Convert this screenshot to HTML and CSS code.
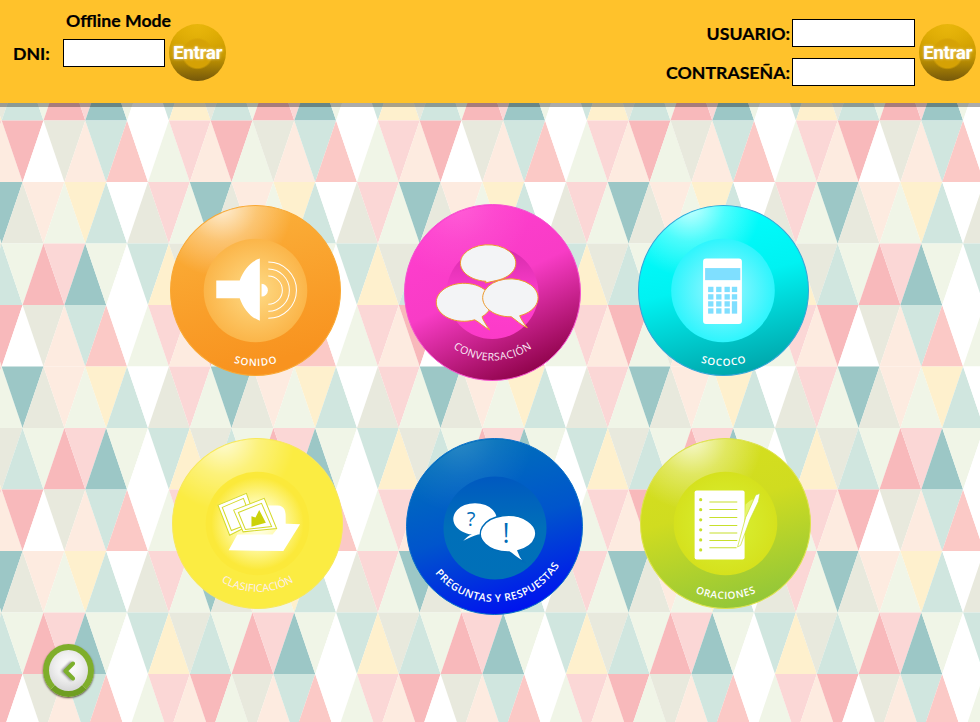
FILE: index.html
```html
<!DOCTYPE html>
<html>
<head>
	<meta charset="utf-8">
	<title>Menu</title>
	<link rel="stylesheet" href="styles.css">
</head>
<body>
<div class="pattern"></div>

<svg class="defs" width="0" height="0">
	<defs>
		<radialGradient id="gloss" cx=".3" cy="0" r=".42">
			<stop offset="0" stop-color="#fff" stop-opacity=".8"/>
			<stop offset=".5" stop-color="#fff" stop-opacity=".3"/>
			<stop offset="1" stop-color="#fff" stop-opacity="0"/>
		</radialGradient>
		<linearGradient id="orange" x1="0" y1="0" x2=".25" y2="1">
			<stop offset="0" stop-color="#fbb33d"/><stop offset="1" stop-color="#f8931f"/>
		</linearGradient>
		<radialGradient id="orange-in">
			<stop offset="0" stop-color="#fedb86"/><stop offset="1" stop-color="#fbb549"/>
		</radialGradient>
		<linearGradient id="pink" x1=".25" y1=".05" x2=".7" y2="1">
			<stop offset="0" stop-color="#ff3ecf"/><stop offset=".45" stop-color="#f83cc6"/><stop offset="1" stop-color="#8a0044"/>
		</linearGradient>
		<linearGradient id="pink-in" x1="0" y1="0" x2="0" y2="1">
			<stop offset="0" stop-color="#d52bab"/><stop offset=".55" stop-color="#ff3ecd"/><stop offset="1" stop-color="#fb3ac8"/>
		</linearGradient>
		<linearGradient id="cyan" x1=".35" y1="0" x2=".6" y2="1">
			<stop offset="0" stop-color="#00ffff"/><stop offset=".45" stop-color="#00f2f2"/><stop offset="1" stop-color="#00a5aa"/>
		</linearGradient>
		<radialGradient id="cyan-in">
			<stop offset="0" stop-color="#a0f6ff"/><stop offset="1" stop-color="#2ef5fd"/>
		</radialGradient>
		<radialGradient id="yellow-in">
			<stop offset="0" stop-color="#fff"/><stop offset=".45" stop-color="#fffbb0"/><stop offset="1" stop-color="#fbe93a"/>
		</radialGradient>
		<linearGradient id="blue" x1=".35" y1="0" x2=".65" y2="1">
			<stop offset="0" stop-color="#0072b8"/><stop offset=".5" stop-color="#0055cc"/><stop offset="1" stop-color="#0010f0"/>
		</linearGradient>
		<linearGradient id="blue-in" x1="0" y1="0" x2="0" y2="1">
			<stop offset="0" stop-color="#0059c0"/><stop offset=".5" stop-color="#006fb9"/><stop offset="1" stop-color="#0070b8"/>
		</linearGradient>
		<linearGradient id="lime" x1=".35" y1="0" x2=".65" y2="1">
			<stop offset="0" stop-color="#d6df1e"/><stop offset=".4" stop-color="#d0dc20"/><stop offset="1" stop-color="#90c63a"/>
		</linearGradient>
		<radialGradient id="lime-in">
			<stop offset="0" stop-color="#d9f236"/><stop offset="1" stop-color="#d5e11d"/>
		</radialGradient>
		<path id="arc170-75" d="M10 85A75 75 0 0 0 160 85"/>
		<path id="arc170-68" d="M17 85A68 68 0 0 0 153 85"/>
		<path id="arc177-68" d="M20.5 88.5A68 68 0 0 0 156.5 88.5"/>
		<path id="arc177-75" d="M13 88.5A75.5 75.5 0 0 0 164 88.5"/>
	</defs>
</svg>

<header class="top">
	<form class="login-offline" action="#">
		<span class="offline-title">Offline Mode</span>
		<label class="dni-label">DNI:</label>
		<input class="field" type="text">
		<button class="entrar" type="button">Entrar</button>
	</form>
	<form class="login-user" action="#">
		<label>USUARIO:</label>
		<input class="field" type="text">
		<button class="entrar" type="button">Entrar</button>
		<label>CONTRASEÑA:</label>
		<input class="field" type="password">
	</form>
</header>

<main class="content">
	<div class="menu">
		<!-- sonido -->
		<svg class="ball" width="171" height="171" viewBox="0 0 170 170">
			<circle cx="85" cy="85" r="84.5" fill="url(#orange)" stroke="#f9a834"/>
			<circle cx="85" cy="85" r="84" fill="url(#gloss)"/>
			<circle cx="85" cy="85" r="51.5" fill="url(#orange-in)"/>
			<path fill="#fff" d="M46 75H69.3C73 65 80 56 89.3 53.3V115C80 112 73 103 69.3 92.7H46Z"/>
			<path fill="#fff" d="M91 78.4A6.3 6.3 0 0 1 91 91Z"/>
			<path fill="none" stroke="#fff" d="M97.700 70.700A14 14 0 0 1 97.700 98.700M97.700 63.700A21 21 0 0 1 97.700 105.700M97.700 56.700A28 28 0 0 1 97.700 112.700"/>
			<text class="ball-label"><textPath href="#arc170-75" startOffset="50%" text-anchor="middle" textLength="44">SONIDO</textPath></text>
		</svg>

		<!-- conversacion -->
		<svg class="ball ball-up" width="177" height="177" viewBox="0 0 177 177">
			<circle cx="88.5" cy="88.5" r="88" fill="url(#pink)" stroke="#f552d0"/>
			<circle cx="88.5" cy="88.5" r="87" fill="url(#gloss)" opacity=".2"/>
			<circle cx="88.5" cy="89" r="46" fill="url(#pink-in)"/>
			<g fill="#f3f4f6" stroke="#ee9a2c">
				<path d="M82 77.3A27.7 18.3 0 1 1 92 76.6L81 79Z"/>
				<path d="M78 112.7A27.7 19 0 1 0 70.7 115.8C75 118 80 123 85.7 126C82 121 79 116 78 112.7Z"/>
				<path d="M115.7 111.7A27.7 19 0 1 0 107.3 112.8C112 116 117 121 123.3 123.7C120 120 117 115 115.7 111.7Z"/>
			</g>
			<text class="ball-label ball-label-thin"><textPath href="#arc177-68" startOffset="50%" text-anchor="middle" textLength="84">CONVERSACIÓN</textPath></text>
		</svg>

		<!-- sococo -->
		<svg class="ball" width="171" height="171" viewBox="0 0 170 170">
			<circle cx="85" cy="85" r="84.5" fill="url(#cyan)" stroke="#35a6d8"/>
			<circle cx="85" cy="85" r="84" fill="url(#gloss)"/>
			<circle cx="84.5" cy="85" r="51.5" fill="url(#cyan-in)"/>
			<rect x="64.7" y="53.3" width="38.6" height="65" rx="3" fill="#fff"/>
			<g fill="#7fdfff">
				<rect x="66.7" y="62.7" width="35" height="12"/>
				<rect x="69.7" y="81.3" width="5.3" height="5.3"/><rect x="77.7" y="81.3" width="5.3" height="5.3"/><rect x="86" y="81.3" width="5.3" height="5.3"/><rect x="93.3" y="81.3" width="5.3" height="5.3"/>
				<rect x="69.7" y="88.7" width="5.3" height="5.3"/><rect x="77.7" y="88.7" width="5.3" height="5.3"/><rect x="86" y="88.7" width="5.3" height="5.3"/><rect x="93.3" y="88.7" width="5.3" height="5.3"/>
				<rect x="69.7" y="95.7" width="5.3" height="5.3"/><rect x="77.7" y="95.7" width="5.3" height="5.3"/><rect x="86" y="95.7" width="5.3" height="5.3"/><rect x="93.3" y="95.7" width="5.3" height="12.3"/>
				<rect x="69.7" y="102.7" width="5.3" height="5.3"/><rect x="77.7" y="102.7" width="5.3" height="5.3"/><rect x="86" y="102.7" width="5.3" height="5.3"/>
			</g>
			<text class="ball-label"><textPath href="#arc170-75" startOffset="50%" text-anchor="middle" textLength="46">SOCOCO</textPath></text>
		</svg>

		<!-- clasificacion -->
		<svg class="ball" width="171" height="171" viewBox="0 0 170 170">
			<circle cx="85" cy="85" r="84.5" fill="#fbec42" stroke="#f8e85a"/>
			<circle cx="85" cy="85" r="84" fill="url(#gloss)"/>
			<circle cx="85" cy="85" r="51.5" fill="#fbe93a"/>
			<circle cx="85" cy="85" r="46" fill="url(#yellow-in)"/>
			<path fill="#fff" d="M90 67H105Q113 67 113 78V90H90Z"/>
			<g fill="#fff" stroke="#d4d92a">
				<path d="M45.7 66.7L74 55L84 83.3L57.3 96.7Z"/>
				<path d="M50 69L71 60L80 84L59 92Z"/>
				<path d="M61.3 71.7L91.7 60L104 90L70.7 93.3Z"/>
				<path d="M66 74L89 65L99 88L73 91Z"/>
			</g>
			<path fill="#ccd20a" d="M79 88.3V77.7L83 79L86.7 71.7L93.3 84.3Z"/>
			<path fill="#fff" d="M56.3 111.7L65 96H100L109 85L127.3 85.7L110.7 112.3Z"/>
			<text class="ball-label ball-label-thin"><textPath href="#arc170-68" startOffset="50%" text-anchor="middle" textLength="76">CLASIFICACIÓN</textPath></text>
		</svg>

		<!-- preguntas -->
		<svg class="ball" width="177" height="177" viewBox="0 0 177 177">
			<circle cx="88.5" cy="88.5" r="88" fill="url(#blue)" stroke="#0a6fc8"/>
			<circle cx="88.5" cy="88.5" r="87" fill="url(#gloss)" opacity=".2"/>
			<circle cx="89" cy="90" r="51.5" fill="url(#blue-in)"/>
			<path fill="#fff" d="M66 96.4A21.7 15.7 0 1 1 72 96.4C67 98 62 100 57.3 102.7C60 100 63 97 66 96.4Z"/>
			<path fill="#fff" stroke="#006cb8" stroke-width="1.5" d="M112 112.8A27.7 18.3 0 1 0 103 114C108 117 113 122 118.3 124C115 120 113 116 112 112.8Z"/>
			<text class="mark" x="65" y="88" font-size="20" text-anchor="middle">?</text>
			<text class="mark" x="100" y="105" font-size="27" text-anchor="middle">!</text>
			<text class="ball-label ball-label-bold"><textPath href="#arc177-75" startOffset="52%" text-anchor="middle" textLength="146">PREGUNTAS Y RESPUESTAS</textPath></text>
		</svg>

		<!-- oraciones -->
		<svg class="ball" width="171" height="171" viewBox="0 0 170 170">
			<circle cx="85" cy="85" r="84.5" fill="url(#lime)" stroke="#dde24e"/>
			<circle cx="85" cy="85" r="84" fill="url(#gloss)"/>
			<circle cx="85" cy="85" r="51.5" fill="url(#lime-in)"/>
			<rect x="54.3" y="52.3" width="49.7" height="68.4" rx="2" fill="#fff"/>
			<g fill="#c8e02c">
				<circle cx="60.3" cy="61.3" r="1.6"/><circle cx="60.3" cy="71.3" r="1.6"/><circle cx="60.3" cy="81.3" r="1.6"/>
				<circle cx="60.3" cy="91.3" r="1.6"/><circle cx="60.3" cy="101.3" r="1.6"/><circle cx="60.3" cy="111.3" r="1.6"/>
			</g>
			<path fill="none" stroke="#c8e02c" d="M69 63.7H96.7M69 71.2H96.7M69 79H96.7M69 87H96.7M69 94.5H96.7M69 102H96.7M69 109H96"/>
			<path fill="#e6f56a" d="M105 66C110 62 112 60 113 62L108 80L104 82Z"/>
			<path fill="#fff" stroke="#c8e02c" stroke-width=".7" d="M97 108.3L105 79L115 56.7L119.3 55L117.7 63.3L109.3 81L100 106.7Z"/>
			<text class="ball-label"><textPath href="#arc170-75" startOffset="50%" text-anchor="middle" textLength="62">ORACIONES</textPath></text>
		</svg>
	</div>

	<button class="back" type="button">
		<svg width="14" height="20" viewBox="0 0 14 20"><path d="M11 2.500L3.500 10L11 17.500" fill="none" stroke="#7cb02c" stroke-width="4" stroke-linecap="round" stroke-linejoin="round"/></svg>
	</button>
</main>

<script src="pattern.js"></script>
</body>
</html>
```

FILE: styles.css
```css
body {margin: 0; width: 980px; height: 722px; overflow: hidden; background: #fff; font-family: "Lato", sans-serif;}

.pattern {position: absolute; top: 0; left: 0; z-index: -1;}
.pattern svg {display: block;}
.defs {position: absolute;}

.top {height: 103px; background: #ffc22b; box-shadow: 0 4px 0 rgba(0,0,0,.33); display: flex; justify-content: space-between; align-items: flex-start;}

.login-offline {display: grid; grid-template-columns: 50px 102px 57px; grid-template-rows: 39px 28px 14px; padding-left: 13px;}
.offline-title {grid-column: 2; grid-row: 1; margin: 11px 0 0 3px; font-size: 17.7px; font-weight: 700; line-height: 20px; white-space: nowrap; color: #000; -webkit-text-stroke: .2px #000;}
.dni-label {grid-column: 1; grid-row: 2; align-self: center;}
.login-offline .field {grid-column: 2; grid-row: 2;}
.login-offline .entrar {grid-column: 3; grid-row: 1 / 4; align-self: end; margin-left: 4px;}

.login-user {display: grid; grid-template-columns: auto 123px 59px; grid-template-rows: 28px 28px; column-gap: 2px; row-gap: 11px; padding: 19px 4px 0 0;}
.login-user label {text-align: right; align-self: center;}
.login-user .entrar {grid-column: 3; grid-row: 1 / 3; align-self: center; margin-left: 2px;}

label {font-size: 17.7px; font-weight: 700; color: #000; -webkit-text-stroke: .2px #000;}
.field {box-sizing: border-box; width: 100%; height: 28px; margin: 0; padding: 0 3px; border: 1px solid #000; background: #fff;}

.entrar {width: 57px; height: 57px; padding: 0; border: 0; border-radius: 50%; color: #fff; font-family: "Roboto", sans-serif; font-size: 19px; font-weight: 700; letter-spacing: -.4px; text-shadow: 0 0 3px rgba(255,255,255,.6);
	background: radial-gradient(circle at 50% 52%, #d6a205 0 14px, rgba(214,162,5,0) 16px), radial-gradient(circle at 50% 2%, #e8b60c 0, rgba(232,182,12,0) 55%), linear-gradient(#e0ab00, #c99a00 55%, #75580a);}

.content {padding-top: 102px;}
.menu {display: grid; grid-template-columns: repeat(3, 234px); grid-template-rows: 233px 206px; padding-left: 170px;}
.ball {display: block;}
.ball-up {margin-top: -1px;}
.ball:nth-of-type(n+4) {margin-left: 2px;}

.ball-label {fill: #fff; font-family: "Open Sans", sans-serif; font-size: 10px; font-weight: 600;}
.ball-label-thin {font-weight: 400; font-size: 10.5px; fill: #fbeef8;}
.ball-label-bold {font-size: 10.5px;}
.mark {fill: #006cb8; font-family: "Open Sans", sans-serif; font-weight: 400;}

.back {display: flex; align-items: center; justify-content: center; box-sizing: border-box; width: 51px; height: 53px; margin-left: 43px; padding: 0; border: 6px solid #7fae2b; border-bottom-color: #6f9e22; border-radius: 50%; background: radial-gradient(circle at 50% 40%, #fff 0, #f0f0f0 40%, #c9c9c9 100%); box-shadow: 0 1px 2px #5a4a3a;}
.back svg {filter: drop-shadow(-2px 0 1px rgba(70,70,70,.55));}
```

FILE: pattern.js
```js
// triangle wallpaper: three rows that come back half a triangle shifted
var colors = {
	P: '#f8b9bb', S: '#fbc9c6', L: '#fbd7d6', E: '#fdebe0', G: '#f0f5e7',
	K: '#e8e9dd', T: '#9cc7c6', M: '#d0e6df', Y: '#fef0cd', W: '#ffffff'
};

var rowA = 'PWKEMSWGLEPGKEMSWGLE';
var rowB = 'EGYMWKLGTK';
var rowC = 'GPLTGWMYKM';

var w = 41.8, h = 61.5;

var rows = [
	[rowC, 22.6], [rowA, 1.7], [rowB, 22.6], [rowC, 1.7], [rowA, -19.2], [rowB, 43.5],
	[rowC, 22.6], [rowA, 1.7], [rowB, 22.6], [rowC, 1.7], [rowA, -19.2]
];

var out = '';
for (var r = 0; r < rows.length; r++) {
	var seq = rows[r][0];
	var y = 59.1 + r * h;
	for (var i = -4; rows[r][1] + i * w / 2 < 980; i++) {
		var x = rows[r][1] + i * w / 2;
		var c = colors[seq[(i + seq.length) % seq.length]];
		var pts = i % 2 == 0
			? [x, y, x + w, y, x + w / 2, y + h]
			: [x + w / 2, y, x + w, y + h, x, y + h];
		out += '<polygon fill="' + c + '" points="' + pts.join(' ') + '"/>';
	}
}

document.querySelector('.pattern').innerHTML = '<svg width="980" height="722">' + out + '</svg>';
```
